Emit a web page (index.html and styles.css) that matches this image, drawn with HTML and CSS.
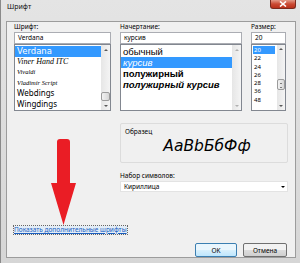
FILE: index.html
```html
<!DOCTYPE html>
<html lang="ru">
<head>
    <meta charset="UTF-8">
    <title>Шрифт</title>
    <link rel="stylesheet" href="styles.css">
</head>
<body>
    <div class="window">
        <div class="titlebar">
            <span class="title">Шрифт</span>
            <div class="close-btn">
                <svg width="8" height="6" viewBox="0 0 8 6">
                    <path d="M1 0.5 L7 5.5 M7 0.5 L1 5.5" stroke="#fff" stroke-width="1.6"/>
                </svg>
            </div>
        </div>

        <div class="client">
            <div class="pickers">
                <!-- Шрифт -->
                <div class="picker picker-font">
                    <div class="label">Шрифт:</div>
                    <div class="field">Verdana</div>
                    <div class="listbox">
                        <ul class="items fonts">
                            <li class="selected f-verdana">Verdana</li>
                            <li class="f-script">Viner Hand ITC</li>
                            <li class="f-script f-tiny">Vivaldi</li>
                            <li class="f-script f-tiny">Vladimir Script</li>
                            <li>Webdings</li>
                            <li>Wingdings</li>
                        </ul>
                        <div class="vscroll">
                            <span class="arrow up"></span>
                            <span class="track"></span>
                            <span class="thumb"></span>
                            <span class="arrow down"></span>
                        </div>
                    </div>
                </div>

                <!-- Начертание -->
                <div class="picker picker-style">
                    <div class="label">Начертание:</div>
                    <div class="field">курсив</div>
                    <div class="listbox">
                        <ul class="items styles">
                            <li>обычный</li>
                            <li class="selected s-italic">курсив</li>
                            <li class="s-bold">полужирный</li>
                            <li class="s-bold s-italic">полужирный курсив</li>
                        </ul>
                        <div class="vscroll disabled">
                            <span class="arrow up"></span>
                            <span class="track"></span>
                            <span class="arrow down"></span>
                        </div>
                    </div>
                </div>

                <!-- Размер -->
                <div class="picker picker-size">
                    <div class="label">Размер:</div>
                    <div class="field">20</div>
                    <div class="listbox">
                        <ul class="items sizes">
                            <li class="selected">20</li>
                            <li>22</li>
                            <li>24</li>
                            <li>26</li>
                            <li>28</li>
                            <li>36</li>
                            <li>48</li>
                        </ul>
                        <div class="vscroll narrow">
                            <span class="arrow up"></span>
                            <span class="thumb grip"></span>
                            <span class="track"></span>
                            <span class="arrow down"></span>
                        </div>
                    </div>
                </div>
            </div>

            <div class="lower">
                <div class="sample-box">
                    <div class="sample-label">Образец</div>
                    <div class="sample-text">AaBbБбФф</div>
                </div>
                <div class="label charset-label">Набор символов:</div>
                <div class="select">
                    <span>Кириллица</span>
                    <span class="caret"></span>
                </div>
            </div>

            <div class="link-row">
                <a href="#" class="more-fonts">Показать дополнительные шрифты</a>
            </div>

            <div class="buttons">
                <button class="btn btn-default">OK</button>
                <button class="btn">Отмена</button>
            </div>
        </div>

        <!-- красная стрелка поверх окна -->
        <svg class="red-arrow" width="26" height="87" viewBox="0 0 26 87">
            <path d="M6 3 Q6 0 9 0 L16 0 Q19 0 19 3 L19 44 L25 44 L12.5 86 L0 44 L6 44 Z" fill="#ea1d25"/>
        </svg>
    </div>
</body>
</html>
```

FILE: styles.css
```css
body {
    margin: 0;
    padding: 0;
    font-family: "Noto Sans", sans-serif;
    font-size: 6.5px;
    color: #000;
}

.window {
    position: relative;
    width: 300px;
    height: 263px;
    box-sizing: border-box;
    padding: 0 4px 5px 5px;
    background: linear-gradient(#e4e4e4, #d6d6d6);
    border-left: 1px solid #8a8a8a;
    display: flex;
    flex-direction: column;
}

.titlebar {
    height: 21px;
    display: flex;
    justify-content: space-between;
    align-items: flex-start;
}

.title {
    padding: 2px 0 0 1px;
    font-size: 7px;
    color: #111;
}

.close-btn {
    width: 26px;
    height: 9px;
    box-sizing: border-box;
    border: 1px solid #7a2a1e;
    border-top: none;
    border-radius: 0 0 3px 3px;
    background: linear-gradient(#e39a88, #cb4a33 50%, #b9301a);
    display: flex;
    align-items: center;
    justify-content: center;
}

.client {
    flex: 1;
    background-color: #f0f0f0;
    border: 1px solid #9c9c9c;
    padding: 0 8px 0 7px;
    display: flex;
    flex-direction: column;
}

.label {
    height: 10px;
    line-height: 10px;
}

.pickers {
    display: flex;
    gap: 9px;
}

.picker-font {
    width: 97px;
}

.picker-style {
    width: 122px;
}

.picker-size {
    width: 35px;
}

.field {
    height: 12px;
    box-sizing: border-box;
    border: 1px solid #abadb3;
    background-color: #fff;
    line-height: 10px;
    padding: 0 3px;
}

.listbox {
    height: 67px;
    box-sizing: border-box;
    border: 1px solid #828790;
    background-color: #fff;
    display: flex;
}

.items {
    flex: 1;
    list-style-type: none;
    margin: 0;
    padding: 1px 0 0 0;
    overflow: hidden;
}

.items li {
    height: 11px;
    line-height: 11px;
    padding-left: 2px;
    font-size: 8px;
    white-space: nowrap;
}

.fonts li {
    height: 10.6px;
    line-height: 10.6px;
}

.styles li {
    font-family: "Liberation Sans", Arial, sans-serif;
    font-size: 9.5px;
}

.items li.selected {
    background-color: #3399ff;
    color: #fff;
}

.f-verdana {
    font-family: "DejaVu Sans", sans-serif;
    font-size: 8.5px !important;
}

.f-script {
    font-family: "Liberation Serif", serif;
    font-style: italic;
}

.f-tiny {
    font-size: 6.5px !important;
}

.s-italic {
    font-style: italic;
}

.s-bold {
    font-weight: bold;
}

.sizes li {
    height: 8.3px;
    line-height: 8.3px;
    font-size: 6px;
}

.sizes li.selected {
    margin-left: 1px;
    width: 21px;
    padding-left: 1px;
}

.vscroll {
    width: 9px;
    display: flex;
    flex-direction: column;
    background: linear-gradient(90deg, #e6e6e6, #f4f4f4);
}

.vscroll.narrow {
    width: 8px;
}

.vscroll .track {
    flex: 1;
}

.vscroll .arrow {
    height: 9px;
    display: flex;
    align-items: center;
    justify-content: center;
}

.vscroll.narrow .arrow {
    height: 8px;
}

.arrow::before {
    content: "";
    width: 0;
    height: 0;
    border-left: 2px solid transparent;
    border-right: 2px solid transparent;
}

.arrow.up::before {
    border-bottom: 2px solid #5a5a5a;
}

.arrow.down::before {
    border-top: 2px solid #5a5a5a;
}

.vscroll.disabled .arrow.up::before {
    border-bottom-color: #b0b0b0;
}

.vscroll.disabled .arrow.down::before {
    border-top-color: #b0b0b0;
}

.vscroll .thumb {
    height: 9px;
    box-sizing: border-box;
    border: 1px solid #9b9b9b;
    border-radius: 2px;
    background: linear-gradient(90deg, #f2f2f2, #d6d6d6);
}

.vscroll .thumb.grip {
    height: 11px;
    margin-top: 26px;
    position: relative;
}

.thumb.grip::after {
    content: "";
    position: absolute;
    left: 2px;
    right: 2px;
    top: 3px;
    height: 3px;
    border-top: 1px solid #7b7b7b;
    border-bottom: 1px solid #7b7b7b;
}

.lower {
    margin-left: 106px;
    width: 168px;
    margin-top: 12px;
}

.sample-box {
    height: 40px;
    box-sizing: border-box;
    border: 1px solid #dcdcdc;
    border-radius: 2px;
    padding: 3px 4px 0 4px;
}

.sample-label {
    height: 9px;
    line-height: 9px;
}

.sample-text {
    text-align: center;
    font-family: "DejaVu Sans", sans-serif;
    font-style: italic;
    font-size: 15.5px;
    line-height: 20px;
    padding-left: 6px;
}

.charset-label {
    margin-top: 8px;
}

.select {
    height: 11px;
    box-sizing: border-box;
    border: 1px solid #e3e3e3;
    background-color: #fff;
    padding: 0 2px 0 3px;
    display: flex;
    align-items: center;
    justify-content: space-between;
    line-height: 9px;
}

.caret {
    width: 0;
    height: 0;
    border-left: 2px solid transparent;
    border-right: 2px solid transparent;
    border-top: 2px solid #000;
}

.link-row {
    margin-top: 33px;
}

.more-fonts {
    color: #1a5ec0;
    text-decoration: underline;
    outline: 1px dotted #666;
    background-color: #e2edf8;
    line-height: 8px;
    display: inline-block;
}

.buttons {
    margin-top: 9px;
    display: flex;
    justify-content: flex-end;
    gap: 6px;
}

.btn {
    height: 14px;
    padding: 0;
    box-sizing: border-box;
    border: 1px solid #707070;
    border-radius: 2px;
    background: linear-gradient(#f2f2f2 50%, #dddddd 50%, #cfcfcf);
    font-family: "Noto Sans", sans-serif;
    font-size: 6.5px;
    color: #000;
}

.btn-default {
    width: 42px;
    border-color: #3c7fb1;
    background: linear-gradient(#eaf6fd 50%, #d9f0fc 50%, #bee6fd);
}

.btn:last-child {
    width: 44px;
}

.red-arrow {
    position: absolute;
    left: 50px;
    top: 139px;
}
```
